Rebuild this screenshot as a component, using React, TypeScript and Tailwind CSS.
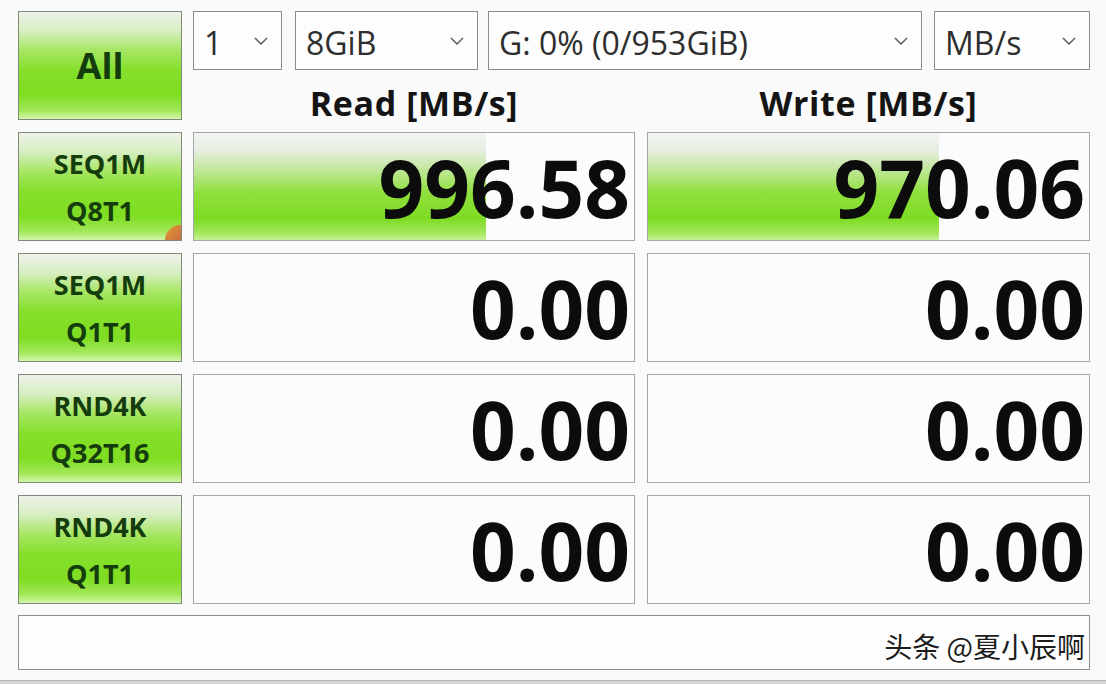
import React from "react";

const font = { fontFamily: '"Open Sans", "Noto Sans", sans-serif' };

const btnBg =
  "bg-[linear-gradient(180deg,#eef2ea_0%,#d6eec0_18%,#a6e662_36%,#84df2a_55%,#7fdd22_78%,#a2e85a_92%,#d2f5a8_100%)]";
const barBg =
  "bg-[linear-gradient(180deg,#f2f4f2_0%,#e8eee2_16%,#bce792_36%,#8fe03c_56%,#7edc24_80%,#a4e85e_94%,#c8f29a_100%)]";

function Chevron() {
  return (
    <svg width="16" height="10" viewBox="0 0 16 10" className="shrink-0">
      <path d="M2 2 L8 8 L14 2" fill="none" stroke="#555" strokeWidth="1.4" />
    </svg>
  );
}

function Select({ label, width }: { label: string; width: string }) {
  return (
    <div
      className={`${width} flex h-[59px] items-center justify-between border border-[#8c8c8c] bg-[#fdfdfd] pl-[10px] pr-[12px] text-[32px] text-[#2e2e2e]`}
    >
      <span className="pt-[4px] leading-none">{label}</span>
      <Chevron />
    </div>
  );
}

function TestButton({ lines, corner }: { lines: string[]; corner?: boolean }) {
  return (
    <div
      className={`relative flex h-[109px] w-[164px] shrink-0 flex-col items-center justify-center border border-[#7f8a7a] ${btnBg} text-[27px] font-bold leading-[47px] text-[#143c0d]`}
    >
      {lines.map((l) => (
        <span key={l}>{l}</span>
      ))}
      {corner && (
        <div className="absolute bottom-0 right-0 h-[15px] w-[16px] rounded-tl-[16px] bg-[linear-gradient(135deg,#e8c040_0%,#d8843a_45%,#c9703a_100%)]" />
      )}
    </div>
  );
}

function Cell({ value, bar, width }: { value: string; bar?: number; width: string }) {
  return (
    <div className={`${width} relative h-[109px] border border-[#a3a6a8] bg-[#fbfcfd]`}>
      {bar !== undefined && (
        <div className={`absolute inset-y-0 left-0 ${barBg}`} style={{ width: `${bar}%` }} />
      )}
      <div className="relative flex h-full items-center justify-end pr-[4px]">
        <span className="text-[80px] font-bold leading-none text-[#0c0c0c]">{value}</span>
      </div>
    </div>
  );
}

const rows = [
  { lines: ["SEQ1M", "Q8T1"], read: "996.58", write: "970.06", readBar: 66.3, writeBar: 66, corner: true },
  { lines: ["SEQ1M", "Q1T1"], read: "0.00", write: "0.00" },
  { lines: ["RND4K", "Q32T16"], read: "0.00", write: "0.00" },
  { lines: ["RND4K", "Q1T1"], read: "0.00", write: "0.00" },
];

export default function App() {
  return (
    <div className="flex h-[684px] w-[1106px] flex-col bg-[#fafafa]" style={font}>
      <div className="flex-1 pl-[18px] pt-[11px]">
        {/* Top: All + selects + headers */}
        <div className="flex gap-[11px]">
          <div
            className={`flex h-[109px] w-[164px] items-center justify-center border border-[#7f8a7a] ${btnBg} text-[36px] font-bold text-[#143c0d]`}
          >
            All
          </div>
          <div className="flex flex-col">
            <div className="flex">
              <Select label="1" width="w-[89px]" />
              <div className="w-[13px]" />
              <Select label="8GiB" width="w-[183px]" />
              <div className="w-[10px]" />
              <Select label="G: 0% (0/953GiB)" width="w-[434px]" />
              <div className="w-[12px]" />
              <Select label="MB/s" width="w-[156px]" />
            </div>
            <div className="flex h-[50px] gap-[12px] pt-[16px] text-[34px] font-bold leading-none tracking-[0.6px] text-[#141414]">
              <div className="w-[442px] text-center">Read [MB/s]</div>
              <div className="w-[443px] text-center">Write [MB/s]</div>
            </div>
          </div>
        </div>

        {/* Result rows */}
        {rows.map((r) => (
          <div key={r.lines.join("")} className="mt-[12px] flex">
            <TestButton lines={r.lines} corner={r.corner} />
            <div className="w-[11px]" />
            <Cell value={r.read} bar={r.readBar} width="w-[442px]" />
            <div className="w-[12px]" />
            <Cell value={r.write} bar={r.writeBar} width="w-[443px]" />
          </div>
        ))}

        {/* Status bar */}
        <div className="mt-[11px] flex h-[55px] w-[1072px] items-center justify-end border border-[#8e8e8e] bg-[#fdfdfd] pr-[4px] pt-[6px]">
          <span
            className="text-[28px] leading-none text-[#1c1c1c] [text-shadow:1px_1px_0_#fff,-1px_-1px_0_#fff,1px_-1px_0_#fff,-1px_1px_0_#fff]"
            style={{ fontFamily: '"Noto Sans CJK SC", "Noto Sans", sans-serif' }}
          >
            头条 @夏小辰啊
          </span>
        </div>
      </div>
      <div className="h-[4px] border-t border-[#b5b5b5] bg-[#d4d4d4]" />
    </div>
  );
}
